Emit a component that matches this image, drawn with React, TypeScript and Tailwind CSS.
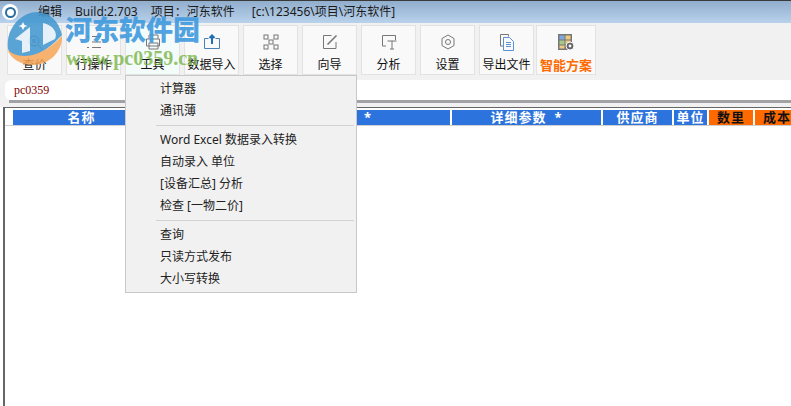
import React from "react";

const cjk = "font-['Noto_Sans','Noto_Sans_CJK_SC',sans-serif]";

function Ic({ children }: { children: React.ReactNode }) {
  return (
    <svg width="18" height="18" viewBox="0 0 18 18" fill="none" stroke="#777" strokeWidth="1">
      {children}
    </svg>
  );
}

const tools: { label: string; icon: React.ReactNode; w?: string; accent?: boolean; tint?: boolean }[] = [
  { label: "查价", icon: <Ic><circle cx="8" cy="8" r="5" /><path d="M12 12l4 4M6 7h4M6 9h4" /></Ic> },
  { label: "行操作", icon: <Ic><path d="M7 3.5h9M7 9h9M7 14.5h9M2 3.5h2M2 14.5h2" /></Ic> },
  { label: "工具", tint: true, icon: <Ic><path d="M5 6V2h9v4M2.5 6h13v7h-13zM5 10h9v6H5z" /></Ic> },
  { label: "数据导入", icon: <Ic><path d="M1.5 5.5h4M12.5 5.5h4v10h-15v-10" stroke="#4a7fb8" /><path d="M9 11V2.5M6.5 5L9 2.5 11.5 5" stroke="#1f6fb5" strokeWidth="2" /></Ic> },
  { label: "选择", icon: <Ic><rect x="2" y="2" width="4" height="4" /><rect x="12" y="2" width="4" height="4" /><rect x="2" y="12" width="4" height="4" /><rect x="12" y="12" width="4" height="4" /><rect x="7" y="7" width="4" height="4" /></Ic> },
  { label: "向导", icon: <Ic><path d="M15 9v6.5H2.500V2.500h8" /><path d="M6.500 11.500L15.500 2.500" strokeWidth="1.600" /></Ic> },
  { label: "分析", icon: <Ic><path d="M6 13H2.500V2.500h13V7" /><path d="M7.500 8h9M12 8v8M10 16h4" /></Ic> },
  { label: "设置", icon: <Ic><path d="M9 2l6 3.500v7L9 16l-6-3.500v-7z" /><circle cx="9" cy="9" r="2.500" /></Ic> },
  { label: "导出文件", icon: <Ic><path d="M5.500 13H2.500V1.500h8v2" /><path d="M5.500 4.500h6l4 4v9h-10z" stroke="#5b8fd6" /><path d="M8 9.500h5M8 11.500h5M8 13.500h5" stroke="#5b8fd6" /></Ic> },
  {
    label: "智能方案", w: "w-[60px]", accent: true,
    icon: (
      <svg width="18" height="18" viewBox="0 0 18 18">
        <rect x="1" y="1" width="14" height="16" fill="#777" />
        <rect x="2.500" y="2.500" width="5" height="4" fill="#7fa8dc" />
        <rect x="8.500" y="2.500" width="5" height="4" fill="#eecb7e" />
        <rect x="2.500" y="7.500" width="5" height="4" fill="#a6c98a" />
        <rect x="8.500" y="7.500" width="5" height="4" fill="#eecb7e" />
        <rect x="2.500" y="12.500" width="5" height="3" fill="#eecb7e" />
        <circle cx="13" cy="13" r="4" fill="#666" stroke="#f9f9f9" strokeWidth="1" />
        <circle cx="13" cy="13" r="1.400" fill="#f9f9f9" />
      </svg>
    ),
  },
];

const columns = [
  { t: "名称", w: "w-[137px]", o: false, s: "", c: "justify-center" },
  { t: "", w: "w-[298px]", o: false, s: "*", c: "justify-end pr-[78px]" },
  { t: "详细参数", w: "w-[149px]", o: false, s: "*", c: "justify-center" },
  { t: "供应商", w: "w-[69px]", o: false, s: "", c: "justify-center" },
  { t: "单位", w: "w-[33px]", o: false, s: "", c: "justify-center" },
  { t: "数里", w: "w-[44px]", o: true, s: "", c: "justify-center" },
  { t: "成本", w: "w-[44px]", o: true, s: "", c: "justify-center" },
];

const menu: (string | null)[] = [
  "计算器", "通讯薄", null,
  "Word Excel 数据录入转换", "自动录入 单位", "[设备汇总] 分析", "检查 [一物二价]", null,
  "查询", "只读方式发布", "大小写转换",
];

export default function App() {
  return (
    <div className={`relative w-[791px] h-[406px] overflow-hidden bg-white ${cjk}`}>
      {/* title bar */}
      <div className="h-[23px] border-t border-[#3a3a3a] bg-gradient-to-b from-[#91aecd] to-[#b9d2ec] flex items-center text-[12px] text-[#1a1a1a]">
        <div className="ml-[2px] w-[16px] h-[16px] rounded-full bg-white flex items-center justify-center">
          <div className="w-[11px] h-[11px] rounded-full border-2 border-[#2a6f9e]" />
        </div>
        <span className="ml-[20px]">编辑</span>
        <span className="ml-[13px]">Build:2.703</span>
        <span className="ml-[13px]">项目：河东软件</span>
        <span className="ml-[17px]">[c:\123456\项目\河东软件]</span>
      </div>

      {/* toolbar */}
      <div className="h-[57px] bg-[#f1f1f1] flex items-start pt-[2px] pl-[7px] gap-[4px]">
        {tools.map((b) => (
          <div
            key={b.label}
            className={`${b.w ?? "w-[55px]"} h-[50px] ${b.tint ? "bg-[#f4fbfb]" : "bg-[#f9f9f9]"} border border-[#e2e2e2] flex flex-col items-center ${b.accent ? "-ml-[2px]" : ""}`}
          >
            <div className="h-[29px] flex items-center pt-[3px]">{b.icon}</div>
            <span className={`leading-[16px] mt-[2px] whitespace-nowrap ${b.accent ? "text-[13px] font-bold text-[#ff6a00]" : "text-[12px] text-[#111]"}`}>
              {b.label}
            </span>
          </div>
        ))}
      </div>

      {/* search row */}
      <div className="bg-[#f1f1f1] h-[27px]">
        <div className="ml-[5px] h-[20px] bg-white rounded-l-[6px] flex items-center pl-[9px] font-['Liberation_Serif',serif] text-[12px] text-[#800000]">
          pc0359
        </div>
        <div className="ml-[9px] h-[3px] bg-[#a2a2a6]" />
      </div>

      {/* table */}
      <div className="border-t border-l-2 border-[#666] ml-[3px] h-[299px]">
        <div className="flex pl-[8px] pt-[2px] gap-[2px] border-b border-[#cfcfcf] h-[18px]">
          {columns.map((c, i) => (
            <div
              key={i}
              className={`${c.w} ${c.c} shrink-0 h-[15px] flex items-center text-[13px] leading-none font-bold tracking-[1px] whitespace-nowrap ${c.o ? "bg-[#ff6a00] text-[#111]" : "bg-[#2c73de] text-white"}`}
            >
              {c.t}{c.s && <span className="ml-[8px]">{c.s}</span>}
            </div>
          ))}
        </div>
      </div>

      {/* dropdown menu */}
      <div className="absolute left-[125px] top-[75px] w-[232px] h-[218px] bg-[#f1f1f1] border border-[#c8c8c8] text-[12px] text-[#222] pt-[2px]">
        {menu.map((m, i) =>
          m === null ? (
            <div key={i} className="ml-[30px] mr-[2px] my-[3px] h-[1px] bg-[#d2d2d2]" />
          ) : (
            <div key={i} className="h-[22px] leading-[22px] pl-[34px]">{m}</div>
          )
        )}
      </div>

      {/* watermark */}
      <div className="absolute left-[5px] top-[11px] opacity-85 pointer-events-none">
        <svg width="58" height="58" viewBox="0 0 58 58">
          <path d="M3 38 C0 16,18 1,32 1 C44 1,54 10,57 24 C50 32,38 42,26 46 C16 49,6 46,3 38 Z" fill="#3f96cf" />
          <path d="M2 38 C10 48,34 50,57 25 C58 38,46 54,28 54 C16 54,6 48,2 38 Z" fill="#f7a657" />
          <path d="M10 28 L20 20 L25 16 V40 L17 42 V30 Z" fill="#fff" opacity="0.85" />
          <path d="M38 12 C48 14,53 22,50 28 L38 34 Z" fill="#fff" opacity="0.85" />
          <path d="M18 11 l1.500 3 3 1 -3 1 -1.500 3 -1.500 -3 -3 -1 3 -1z" fill="#fff" />
        </svg>
      </div>
      <div className="absolute left-[65px] top-[12px] pointer-events-none whitespace-nowrap font-['Noto_Sans_CJK_SC',sans-serif] font-black text-[27px] leading-[34px] text-[#3f9ade] opacity-90">
        河东软件园
      </div>
      <div className="absolute left-[66px] top-[48px] pointer-events-none whitespace-nowrap font-['Liberation_Serif',serif] font-bold text-[20px] leading-[20px] text-[#7ab648] opacity-80">
        www.pc0359.cn
      </div>
    </div>
  );
}
